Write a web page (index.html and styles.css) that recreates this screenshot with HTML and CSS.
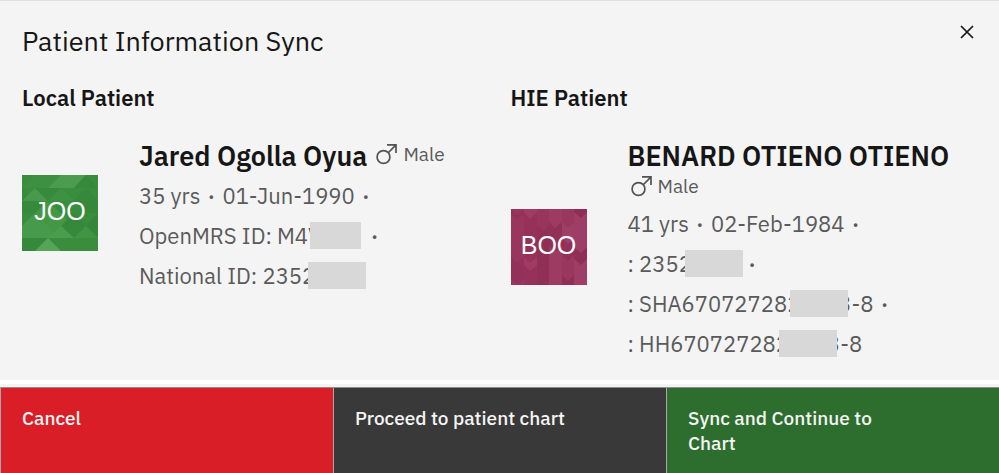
FILE: index.html
```html
<!DOCTYPE html>
<html lang="en">
<head>
    <meta charset="UTF-8">
    <meta name="viewport" content="width=device-width, initial-scale=1.0">
    <title>Patient Information Sync</title>
    <link rel="stylesheet" href="styles.css">
</head>
<body>
    <div class="modal" role="dialog" aria-labelledby="modalTitle">
        <header class="modal-header">
            <h1 id="modalTitle">Patient Information Sync</h1>
            <button class="close" type="button" aria-label="Close">
                <svg width="14" height="14" viewBox="0 0 14 14"><path d="M1 1L13 13M13 1L1 13" stroke="#161616" stroke-width="1.7" fill="none"/></svg>
            </button>
        </header>

        <main class="patients">
            <section class="patient">
                <h2>Local Patient</h2>
                <div class="card">
                    <div class="avatar">
                        <svg viewBox="0 0 76 76" aria-hidden="true">
                            <rect width="76" height="76" fill="#388e3c"/>
                            <path d="M0 13L13 0H39L26 13z" fill="#3d9040"/>
                            <path d="M26 13L39 0L64 0L52 13z" fill="#4b9c4e"/>
                            <path d="M52 13L64 0L76 13z" fill="#36893a"/>
                            <path d="M0 13L26 38H0z" fill="#378a3b"/>
                            <path d="M0 26L13 13L26 26z" fill="#489a4a"/>
                            <path d="M13 13H39L26 26z" fill="#378a3b"/>
                            <path d="M26 26L39 13L52 26z" fill="#3d9141"/>
                            <path d="M52 26L64 13L76 26V38H64z" fill="#36893a"/>
                            <path d="M0 51L13 38L39 63H0z" fill="#479a49"/>
                            <path d="M13 38L26 26L52 51L39 63z" fill="#429845"/>
                            <path d="M39 51L52 38L64 51L52 63z" fill="#36893a"/>
                            <path d="M64 51L76 38V63z" fill="#34863a"/>
                            <path d="M26 63L39 51L52 63z" fill="#4b9d4e"/>
                            <path d="M0 63H26L13 76H0z" fill="#36883a"/>
                            <path d="M13 76L26 63L39 76z" fill="#55a458"/>
                            <path d="M52 63L64 51L76 63z" fill="#419444"/>
                        </svg>
                        <span>JOO</span>
                    </div>
                    <div class="details">
                        <div class="name-row">
                            <h3>Jared Ogolla Oyua</h3>
                            <span class="gender">
                                <svg width="24" height="22" viewBox="0 0 24 22" aria-hidden="true"><path d="M14 1.8H23V10M23 1.8L15 10"/><circle cx="10.5" cy="14" r="6.4"/></svg>
                                Male
                            </span>
                        </div>
                        <p>35 yrs <i>·</i> 01-Jun-1990 <i>·</i></p>
                        <p>OpenMRS ID: M4V<span class="mask short"></span> <i>·</i></p>
                        <p>National ID: 2352<span class="mask"></span></p>
                    </div>
                </div>
            </section>

            <section class="patient">
                <h2>HIE Patient</h2>
                <div class="card">
                    <div class="avatar">
                        <svg viewBox="0 0 76 76" aria-hidden="true">
                            <rect width="76" height="76" fill="#963159"/>
                            <path d="M0 0H13V76H0z" fill="#9a355d"/>
                            <path d="M13 0H26V76H13z" fill="#96325a"/>
                            <path d="M26 0H38V76H26z" fill="#913056"/>
                            <path d="M38 0H51V76H38z" fill="#9d3b62"/>
                            <path d="M51 0H63V76H51z" fill="#9a375f"/>
                            <path d="M63 0H76V76H63z" fill="#9e3e66"/>
                            <path d="M0 0L6 6L13 0V5L6 11L0 5zM0 48L6 54L13 48V70L6 76L0 70z" fill="#94305a"/>
                            <path d="M13 0H26V3L19 10L13 3zM13 48L19 54L26 48V56L19 62L13 56z" fill="#a03c64"/>
                            <path d="M26 0H38V16L32 22L26 16z" fill="#99355d"/>
                            <path d="M38 13L44 19L51 13V37L44 43L38 37z" fill="#923058"/>
                            <path d="M51 13L57 19L63 13V29L57 35L51 29z" fill="#9f3f66"/>
                            <path d="M51 29L57 35L63 29V46L57 52L51 46z" fill="#923058"/>
                            <path d="M63 0H76V3L70 9L63 3zM63 38L70 44L76 38V50L70 56L63 50z" fill="#902e55"/>
                            <path d="M51 66L57 72L63 66V76H51z" fill="#902e55"/>
                        </svg>
                        <span>BOO</span>
                    </div>
                    <div class="details">
                        <div class="name-row">
                            <h3>BENARD OTIENO OTIENO</h3>
                            <span class="gender">
                                <svg width="24" height="22" viewBox="0 0 24 22" aria-hidden="true"><path d="M14 1.8H23V10M23 1.8L15 10"/><circle cx="10.5" cy="14" r="6.4"/></svg>
                                Male
                            </span>
                        </div>
                        <p>41 yrs <i>·</i> 02-Feb-1984 <i>·</i></p>
                        <p>: 2352<span class="mask"></span> <i>·</i></p>
                        <p>: SHA670727282<span class="mask inner"></span>3-8 <i>·</i></p>
                        <p>: HH670727282<span class="mask inner"></span>3-8</p>
                    </div>
                </div>
            </section>
        </main>

        <footer class="actions">
            <button class="cancel" type="button">Cancel</button>
            <button class="proceed" type="button">Proceed to patient chart</button>
            <button class="sync" type="button">Sync and Continue to Chart</button>
        </footer>
    </div>
</body>
</html>
```

FILE: styles.css
```css
* { box-sizing: border-box; }
body { margin: 0; background: #f4f4f4; color: #161616; font-family: "IBM Plex Sans", Inter, "Liberation Sans", sans-serif; }
h1, h2, h3, p { margin: 0; }
button { border: 0; font-family: inherit; cursor: pointer; }

.modal { display: flex; flex-direction: column; min-height: 100vh; border-top: 1px solid #e0e0e0; background: #f4f4f4; }
.modal-header { display: flex; justify-content: space-between; align-items: flex-start; padding: 20px 17px 0 22px; }
h1 { font-size: 27px; font-weight: 400; line-height: 40px; }
.close { display: flex; align-items: center; justify-content: center; width: 30px; height: 22px; padding: 0; background: none; }

.patients { display: grid; grid-template-columns: 1fr 1fr; flex: 1; padding: 21px 0 14px 22px; }
h2 { font-size: 22px; font-weight: 600; line-height: 32px; }
.card { display: flex; align-items: center; gap: 41px; margin-top: 26px; }

.avatar { position: relative; flex: none; width: 76px; height: 76px; margin-bottom: 10px; }
.avatar svg { display: block; width: 100%; height: 100%; }
.avatar span { position: absolute; inset: 0; color: white; font: 25px/73px "Liberation Sans", Arial, sans-serif; text-align: center; }

.name-row { display: flex; flex-wrap: wrap; align-items: flex-start; column-gap: 6px; margin-bottom: 4px; }
h3 { font-size: 27px; font-weight: 600; line-height: 32px; white-space: nowrap; }
.gender { display: flex; align-items: center; gap: 6px; color: #5a5a5a; font-size: 19px; line-height: 28px; }
.gender svg { fill: none; stroke: #525252; stroke-width: 1.7; }

.details p { color: #5a5a5a; font-size: 22px; line-height: 40px; white-space: nowrap; }
.details i { margin: 0 2px; font-style: normal; font-weight: 600; }

/* grey blocks hiding part of an identifier */
.mask { display: inline-block; position: relative; width: 58px; height: 27px; margin: 0 -2px 0 -7px; background: #d8d8d8; vertical-align: -5px; }
.mask.short { width: 51px; margin: 0 2px 0 -11px; }
.mask.inner { margin: 0 -10px; }

.actions { display: grid; grid-template-columns: repeat(3, 1fr); border-top: 4px solid white; padding-top: 3px; }
.actions button { display: flex; align-items: flex-start; min-height: 86px; padding: 18px 80px 16px 21px; border-top: 1px solid #8d8d8d; border-left: 1px solid #a8a8a8; color: #f4f4f4; font-size: 19px; font-weight: 500; line-height: 25px; text-align: left; }
.actions .cancel { background: #da1e28; }
.actions .proceed { background: #393939; }
.actions .sync { background: #2d6e2f; }
```
